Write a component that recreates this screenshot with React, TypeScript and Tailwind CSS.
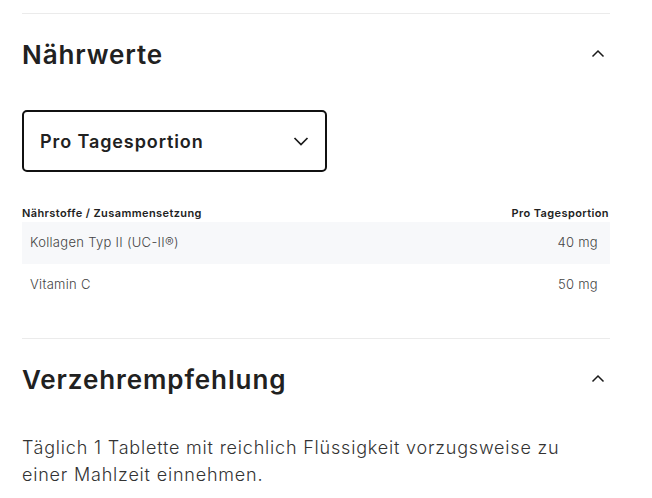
import React from 'react';

const ChevronUp = () => (
  <svg width="18" height="18" viewBox="0 0 18 18" fill="none" className="text-[#1a1a1a]">
    <path d="M3.5 11.5 L9 6 L14.5 11.5" stroke="currentColor" strokeWidth="1.5" />
  </svg>
);

const ChevronDown = () => (
  <svg width="20" height="20" viewBox="0 0 20 20" fill="none" className="text-[#1a1a1a]">
    <path d="M3.5 7 L10 13.5 L16.5 7" stroke="currentColor" strokeWidth="1.7" />
  </svg>
);

const rows = [
  { name: 'Kollagen Typ II (UC-II®)', value: '40 mg' },
  { name: 'Vitamin C', value: '50 mg' },
];

export default function App() {
  return (
    <div className="min-h-screen bg-white pt-[13px] pl-[22px] pr-[42px] font-['Inter',sans-serif] text-[#212121]">
      {/* Nährwerte */}
      <section className="border-t border-[#ebebeb]">
        <div className="flex h-[80px] items-center justify-between">
          <h2 className="text-[26px] font-semibold tracking-[0.9px]">Nährwerte</h2>
          <span className="mr-[3px]">
            <ChevronUp />
          </span>
        </div>

        <button className="mt-[16px] flex h-[62px] w-[305px] items-center justify-between rounded-[5px] border-2 border-[#111] pl-[16px] pr-[14px]">
          <span className="text-[18px] font-semibold tracking-[0.9px]">Pro Tagesportion</span>
          <ChevronDown />
        </button>

        <div className="mt-[33px]">
          <div className="flex h-[17px] items-center justify-between text-[11px] font-semibold tracking-[0.4px] text-[#222]">
            <span>Nährstoffe / Zusammensetzung</span>
            <span className="mr-[1px]">Pro Tagesportion</span>
          </div>
          {rows.map((r, i) => (
            <div
              key={r.name}
              className={`flex h-[42px] items-center justify-between px-[8px] text-[13px] font-light tracking-[0.3px] text-[#444] ${i % 2 === 0 ? 'bg-[#f7f8fa]' : ''}`}
            >
              <span>{r.name}</span>
              <span className="pr-[4px]">{r.value}</span>
            </div>
          ))}
        </div>
      </section>

      {/* Verzehrempfehlung */}
      <section className="mt-[32px] border-t border-[#ebebeb]">
        <div className="flex h-[80px] items-center justify-between">
          <h2 className="text-[26px] font-semibold tracking-[0.9px]">Verzehrempfehlung</h2>
          <span className="mr-[3px]">
            <ChevronUp />
          </span>
        </div>
        <p className="mt-[15px] max-w-[560px] text-[18px] font-light leading-[27px] tracking-[0.8px] text-[#333]">
          Täglich 1 Tablette mit reichlich Flüssigkeit vorzugsweise zu einer Mahlzeit einnehmen.
        </p>
      </section>
    </div>
  );
}
